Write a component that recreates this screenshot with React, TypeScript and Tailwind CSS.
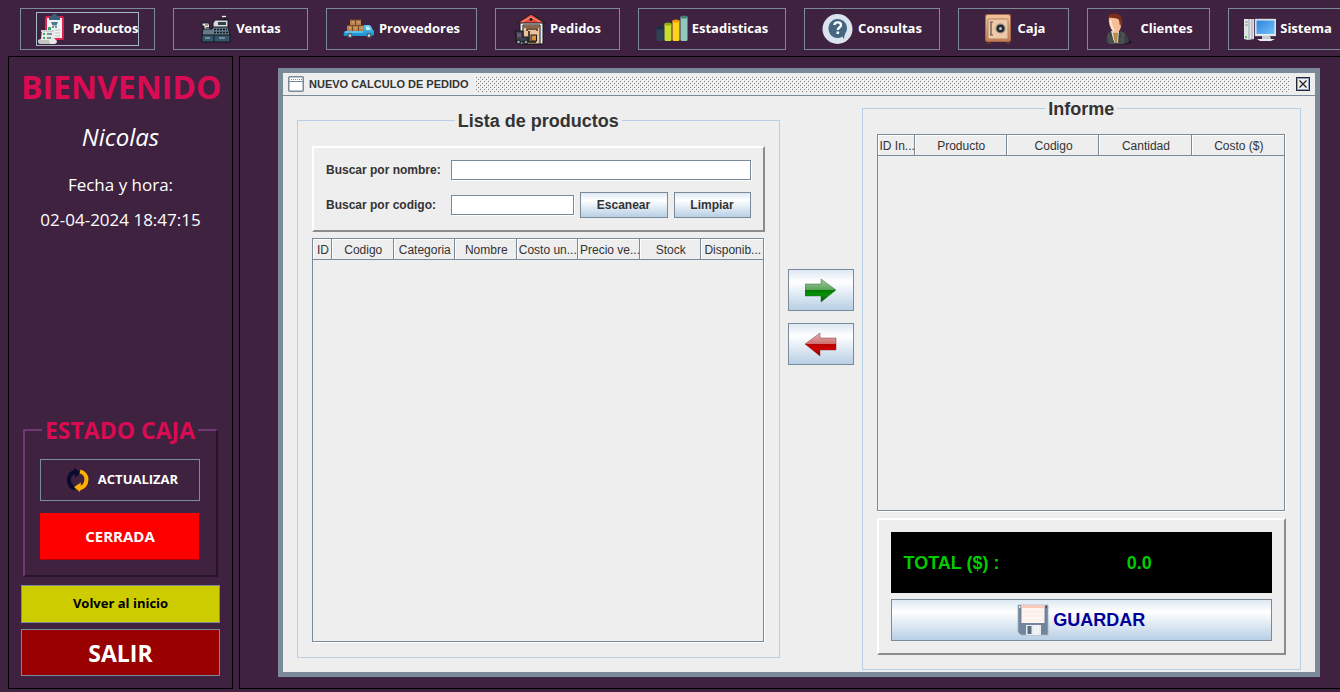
import type { ReactNode } from 'react';

const trebuchet = "font-['Trebuchet_MS','Open_Sans',sans-serif]";
const steel =
  'border border-[#7a8a99] bg-[linear-gradient(to_bottom,#dde8f3_0%,#ffffff_30%,#b8cfe5_100%)]';

function Icon({ children, className = 'size-8' }: { children: ReactNode; className?: string }) {
  return (
    <svg viewBox="0 0 32 32" className={`shrink-0 ${className}`} aria-hidden="true">
      {children}
    </svg>
  );
}

function ProductsIcon() {
  return (
    <Icon>
      <rect x="8" y="3" width="19" height="24" rx="2" fill="#e0224e" />
      <rect x="10" y="5" width="15" height="20" fill="#f2f2f2" />
      <path d="M12 7V4l3-1c0-3 5-3 5 0l3 1v3z" fill="#36607a" />
      <path d="M14 9h7l-1.500 3.500h-4z" fill="#4b7690" />
      <circle cx="16" cy="14" r=".9" fill="#36607a" />
      <circle cx="19" cy="14" r=".9" fill="#36607a" />
      <path d="M18 17h5M18 20h5M18 23h5" stroke="#b9c3ca" />
      <rect x="11" y="14" width="3" height="3" fill="#36b36a" />
      <path d="M5 17h12v8l3 3c0 2-1 3-3 3H5c-3 0-4-1-4-4l3-1z" fill="#e9e9e6" />
      <path d="M1 27h11c0 2 1 4 3 4H5c-3 0-4-1-4-4z" fill="#c4c6c4" />
      <path d="M4 17h13v2H4z" fill="#cdd2d4" />
      <rect x="6" y="20" width="2" height="2" fill="#36b36a" />
      <rect x="6" y="24" width="2" height="2" fill="#36b36a" />
      <path d="M10 21h5M10 25h4" stroke="#54758c" strokeWidth="1.500" />
    </Icon>
  );
}

function SalesIcon() {
  return (
    <Icon>
      <path d="M25 7V3.500h-3" fill="none" stroke="#15191f" strokeWidth="2.500" />
      <path d="M22 3.500h4" stroke="#f2f2f2" strokeWidth="1.500" />
      <path d="M15 7h13v8H13v-5z" fill="#d9dde0" stroke="#15191f" />
      <rect x="18" y="9" width="8" height="3" fill="#32414d" />
      <path d="M2 10h7l1 7H4v-4H2z" fill="#eeeae4" stroke="#15191f" />
      <path d="M5 12h3M6 14.500h3" stroke="#4a4a4a" />
      <path d="M3 16h9l1-2h15l2 8v1H2v-1z" fill="#657b8b" stroke="#15191f" />
      <rect x="2" y="22" width="28" height="7" fill="#35556a" stroke="#15191f" />
      <path d="M14 16.500h13M14 19.500h14" stroke="#15191f" strokeWidth="1.500" strokeDasharray="2 1" />
      <path d="M5 25h5M19 25h6" stroke="#a5c3d4" />
      <path d="M14 22v7" stroke="#15191f" />
    </Icon>
  );
}

function SuppliersIcon() {
  return (
    <Icon>
      <defs>
        <linearGradient id="truck" x1="0" y1="0" x2="0" y2="1">
          <stop offset="0" stopColor="#5cc6f0" />
          <stop offset="1" stopColor="#1590d0" />
        </linearGradient>
      </defs>
      <path d="M7 7h11v5h3v7H4v-7h3z" fill="#b98450" />
      <path d="M7 7h11M4 12.500h17M12.500 7v5M9.500 13v6M15.500 13v6" stroke="#7c4b22" />
      <path d="M9 9h2M14.500 9h2M6 15h2M11.500 15h2M17.500 15h2" stroke="#e0b583" />
      <path d="M2 18h19V12h5c2 0 3 3 4 5l1 1v4l-2 1H1c-1-2 0-4 1-5z" fill="url(#truck)" />
      <path d="M23 13.500h3l2 3.500h-5z" fill="#c3ecfb" />
      <path d="M2 19h18" stroke="#8fd8f5" />
      <circle cx="7" cy="22.500" r="2.500" fill="#50585e" />
      <circle cx="26" cy="22.500" r="2.500" fill="#50585e" />
      <circle cx="7" cy="22.500" r="1.200" fill="#d5dadd" />
      <circle cx="26" cy="22.500" r="1.200" fill="#d5dadd" />
    </Icon>
  );
}

function OrdersIcon() {
  return (
    <Icon>
      <path d="M6 9h23v22H6z" fill="#e7edf0" stroke="#17191f" />
      <path d="M9 12h17v19H9z" fill="#ecc39c" stroke="#17191f" />
      <path d="M9.500 12.500h16V15h-16z" fill="#8f6547" />
      <path d="M13 18v-2h10v2" fill="none" stroke="#4a3527" strokeWidth="1.500" />
      <path d="M17 1 31 10H3z" fill="#e64c3c" stroke="#17191f" />
      <path d="M8 9l9-5 9 5" fill="none" stroke="#ff9c83" />
      <circle cx="17" cy="6.500" r="1.400" fill="#17191f" />
      <rect x="17" y="22" width="5.500" height="6" fill="#d59043" stroke="#17191f" />
      <path d="M1 18h8v6h5v5H2v-9H1z" fill="#3e4151" stroke="#11131a" />
      <path d="M3 20h4v4H3z" fill="#6d5670" />
      <path d="M15 18v11h7" fill="none" stroke="#11131a" strokeWidth="1.500" />
      <circle cx="4.500" cy="29" r="1.900" fill="#9ba5ad" stroke="#11131a" />
      <circle cx="12" cy="29" r="1.900" fill="#9ba5ad" stroke="#11131a" />
    </Icon>
  );
}

function StatsIcon() {
  const bars = [
    { x: 0, y: 14, body: '#2d4256', top: '#1b3042' },
    { x: 8, y: 10, body: '#c8de35', top: '#8fae12' },
    { x: 16, y: 7, body: '#ffd21a', top: '#f09b00' },
    { x: 24, y: 3, body: '#92c7bd', top: '#3f8274' },
  ];
  return (
    <Icon>
      {bars.map(({ x, y, body, top }) => (
        <g key={x}>
          <rect x={x + 0.5} y={y} width="7" height={28 - y} rx="1.500" fill={body} />
          <ellipse cx={x + 4} cy={y + 1} rx="3.500" ry="1.500" fill={top} />
        </g>
      ))}
    </Icon>
  );
}

function HelpIcon() {
  return (
    <Icon>
      <circle cx="15.500" cy="16" r="15" fill="#dbe4ee" />
      <path d="M15.500 6C21 6 25 10 25 15c0 4-2.500 5-3 11-1-1-1.500-2-1.500-2.500-2 1-3.500 1.500-5 1.500C10 25 6.500 20.500 6.500 15.500S10 6 15.500 6z" fill="#456681" />
      <path d="M12.500 12c0-3.500 6.500-3.500 6.500 0 0 2.500-3.200 2.500-3.200 5" fill="none" stroke="#fff" strokeWidth="2.400" />
      <rect x="14.500" y="18.500" width="2.600" height="2.500" fill="#fff" />
    </Icon>
  );
}

function SafeIcon() {
  return (
    <Icon>
      <defs>
        <linearGradient id="safe" x1="0" y1="0" x2="0" y2="1">
          <stop offset="0" stopColor="#f1c59d" />
          <stop offset="1" stopColor="#bd7d55" />
        </linearGradient>
      </defs>
      <path d="M5 29h4v2H5zM24 29h4v2h-4z" fill="#5a3826" />
      <rect x="3" y="1" width="26" height="28" rx="2" fill="#a7694a" />
      <rect x="4" y="2" width="24" height="26" rx="2" fill="url(#safe)" />
      <rect x="6" y="6" width="20" height="20" rx="1" fill="#eec9a7" stroke="#b98361" />
      <path d="M9 9v13M8 9h3M8 22h3" stroke="#5b5149" strokeWidth="1.200" />
      <circle cx="18.500" cy="15.500" r="5" fill="#8b8580" />
      <circle cx="18.500" cy="15.500" r="3.800" fill="#24282c" />
      <circle cx="18.500" cy="15.500" r="1.500" fill="#c5c9cc" />
    </Icon>
  );
}

function ClientsIcon() {
  return (
    <Icon>
      <ellipse cx="17" cy="29" rx="11" ry="2.500" fill="#20122a" />
      <path d="M2 29c0-8 3-10 8-11h5c7 1 9 5 10 11-5 3-18 3-23 0z" fill="#3b3f42" />
      <path d="M7 18l3 12h4l1-12z" fill="#d8d9d6" />
      <path d="M9 20l2 10h2l1-10-2-1z" fill="#b88a43" />
      <path d="M6.500 18l-.5 5 2 1 3 7H5L3 22zM16 18l1 6-4 7h7l1-11z" fill="#4b5053" />
      <path d="M5 5c1-3 11-4 12 1 1 5 0 13-5 14-5-1-8-10-7-15z" fill="#f6be98" />
      <path d="M6.500 7c.5 5 1 8 4 11" fill="none" stroke="#ffe2c9" strokeWidth="2" />
      <path d="M3 5C5-1 16-1 17.500 5c.5 3 0 6-1.500 8l-1-6c-3-3-7-1-11-3z" fill="#7a2f17" />
    </Icon>
  );
}

function SystemIcon() {
  return (
    <Icon>
      <defs>
        <linearGradient id="screen" x1="0" y1="0" x2="1" y2="1">
          <stop offset="0" stopColor="#2c83dc" />
          <stop offset="1" stopColor="#73c2fb" />
        </linearGradient>
      </defs>
      <path d="M0 6h10v20l-6 1-4-1z" fill="#dfe3e5" />
      <path d="M5 6v21M8 6v20" stroke="#9ea5a9" />
      <path d="M1 9h3M1 12h3" stroke="#8a9297" />
      <rect x="1" y="23" width="2" height="2" fill="#62bf58" />
      <rect x="11" y="6" width="21" height="17" fill="#edf0f2" stroke="#a6afb5" strokeWidth=".5" />
      <rect x="12.500" y="7.500" width="18" height="13.500" fill="url(#screen)" />
      <path d="M18 23h8l1 3h-9z" fill="#c7ccd0" />
      <path d="M13 26h18l-4 2H16z" fill="#e8ebed" />
    </Icon>
  );
}

function RefreshIcon() {
  return (
    <Icon>
      <path d="M13 24.500C4.500 21 5 9 14 7.500" fill="none" stroke="#080b2c" strokeWidth="4" />
      <path d="M12 4l7 4.500-6 5z" fill="#080b2c" />
      <path d="M18 7.500c9 2 8.500 14.500-1 17" fill="none" stroke="#ffb000" strokeWidth="4" />
      <path d="M19 18.500l-7 4.500 6 5z" fill="#ffb000" />
    </Icon>
  );
}

function Arrow({ color }: { color: 'green' | 'red' }) {
  const green = color === 'green';
  const shape = green ? 'M0 10h16V5l15 11-15 12v-6H0z' : 'M31 10H15V5L0 16l15 12v-6h16z';
  return (
    <Icon>
      <defs>
        <linearGradient id={color} x1="0" y1="0" x2="0" y2="1">
          <stop offset="0" stopColor={green ? '#a5cda3' : '#e0b4b4'} />
          <stop offset=".48" stopColor={green ? '#5aa35a' : '#cf6d6d'} />
          <stop offset=".49" stopColor={green ? '#007c00' : '#b80000'} />
          <stop offset=".7" stopColor={green ? '#079407' : '#d00000'} />
          <stop offset="1" stopColor={green ? '#004c00' : '#760000'} />
        </linearGradient>
      </defs>
      <path d={shape} fill={`url(#${color})`} stroke={green ? '#286328' : '#7c2424'} strokeOpacity=".55" strokeWidth=".8" />
    </Icon>
  );
}

function FloppyIcon() {
  return (
    <Icon>
      <path d="M1 1h30v30H4l-3-3z" fill="#71869d" stroke="#a2b2c1" strokeWidth=".8" />
      <rect x="4.500" y="1" width="23" height="18" fill="#fff5f0" />
      <rect x="4.500" y="1" width="23" height="3" fill="#f9cabc" />
      <path d="M5 8h22M5 12h22M5 16h22" stroke="#f4e6e1" strokeWidth=".7" />
      <rect x="2" y="2" width="1.500" height="2" fill="#e7edf2" />
      <rect x="28.500" y="2" width="1.500" height="2" fill="#3c4b5c" />
      <rect x="9" y="21" width="15" height="10" fill="#e9ebec" />
      <rect x="10.500" y="22" width="4" height="8" fill="#596f86" />
      <path d="M18 21v10M21 21v10" stroke="#fff" />
    </Icon>
  );
}

const menu = [
  { label: 'Productos', width: 'w-[135px]', icon: <ProductsIcon /> },
  { label: 'Ventas', width: 'w-[135px]', icon: <SalesIcon /> },
  { label: 'Proveedores', width: 'w-[151px]', icon: <SuppliersIcon /> },
  { label: 'Pedidos', width: 'w-[125px]', icon: <OrdersIcon /> },
  { label: 'Estadisticas', width: 'w-[148px]', icon: <StatsIcon /> },
  { label: 'Consultas', width: 'w-[136px]', icon: <HelpIcon /> },
  { label: 'Caja', width: 'w-[111px]', icon: <SafeIcon /> },
  { label: 'Clientes', width: 'w-[123px]', icon: <ClientsIcon /> },
  { label: 'Sistema', width: 'w-[120px]', icon: <SystemIcon /> },
];

function DataTable({ columns, className }: { columns: [string, string][]; className: string }) {
  return (
    <div className={`mr-px border border-[#7a8a99] shadow-[1px_1px_0_#ffffff] ${className}`}>
      <table className="w-full table-fixed border-separate border-spacing-0 text-[12px] leading-4">
        <thead>
          <tr>
            {columns.map(([name, width]) => (
              <th
                key={name}
                className={`h-[21px] border-r border-b border-[#7a8a99] p-0 pt-px pl-0.5 text-center font-normal whitespace-nowrap shadow-[inset_1px_1px_0_#ffffff] last:border-r-0 ${width}`}
              >
                {name}
              </th>
            ))}
          </tr>
        </thead>
        <tbody />
      </table>
    </div>
  );
}

const raised =
  'border-2 border-t-white border-l-white border-r-[#8c8c8c] border-b-[#8c8c8c]';
const field =
  'h-5 min-w-0 border border-[#7a8a99] bg-white px-1 text-[12px] shadow-[1px_1px_0_#ffffff] outline-none';
const heading = 'mx-auto h-5 px-[3px] text-[18px] leading-[22px] font-bold';

export default function App() {
  return (
    <div className={`flex min-h-screen flex-col overflow-hidden bg-[#3e2240] pb-[3px] text-white ${trebuchet}`}>
      <nav className="flex gap-[18px] overflow-hidden px-5 pt-2 pb-1.5">
        {menu.map(({ label, width, icon }, i) => (
          <button
            key={label}
            type="button"
            className={`flex h-[42px] shrink-0 items-center justify-center border border-[#7a8a99] text-[13px] font-bold ${width}`}
          >
            <span className={`flex items-center gap-1 ${i === 0 ? 'outline outline-[#a3b8cc]' : ''}`}>
              {icon}
              {label}
            </span>
          </button>
        ))}
      </nav>

      <div className="flex flex-1 gap-1.5 pl-2">
        <aside className="flex w-[225px] shrink-0 flex-col border border-black px-3 pb-3 text-center">
          <h1 className="mt-2 text-[32px] leading-[44px] font-bold text-[#d90b52]">BIENVENIDO</h1>
          <p className="mt-[13px] text-[24px] leading-[30px] italic">Nicolas</p>
          <p className="mt-[21px] text-[17px] leading-6">Fecha y hora:</p>
          <p className="mt-[11px] text-[17px] leading-6 whitespace-nowrap">02-04-2024 18:47:15</p>

          <fieldset className="mx-0.5 mt-auto flex flex-col gap-3 border-2 border-t-[#6d3b71] border-r-[#261528] border-b-[#261528] border-l-[#6d3b71] pt-3.5 pr-4 pb-[15px] pl-[15px]">
            <legend className="mx-auto px-[3px] text-[23px] leading-[30px] font-bold whitespace-nowrap text-[#d90b52]">
              ESTADO CAJA
            </legend>
            <button type="button" className="flex h-[42px] items-center justify-center gap-1 border border-[#7a8a99] text-[13px] font-bold">
              <RefreshIcon />
              ACTUALIZAR
            </button>
            <div className="flex h-[47px] items-center justify-center border border-t-[#ff0000] border-r-[#b20000] border-b-[#b20000] border-l-[#ff0000] bg-[#ff0000] text-[15px] font-bold">
              CERRADA
            </div>
          </fieldset>

          <button type="button" className="mt-2 h-[38px] border border-[#7a8a99] bg-[#cccc00] text-[13px] font-bold text-black">
            Volver al inicio
          </button>
          <button type="button" className="mt-1.5 h-[47px] border border-[#7a8a99] bg-[#990000] text-[23px] leading-8 font-bold">
            SALIR
          </button>
        </aside>

        <main className="flex min-w-0 flex-1 border border-r-0 border-black pt-[11px] pr-5 pb-[11px] pl-[38px]">
          <section className="flex min-w-0 flex-1 flex-col border-5 border-[#7a8a99] bg-[#eeeeee] font-['Liberation_Sans',Arial,sans-serif] text-[#333333]">
            <header className="flex h-[23px] items-center border-b border-[#7a8a99] pr-[5px] pl-[5px]">
              <svg viewBox="0 0 16 16" className="size-4 shrink-0" aria-hidden="true">
                <rect x=".75" y=".75" width="14.500" height="14.500" rx="1" fill="#fff" stroke="#7a8a99" strokeWidth="1.500" />
                <path d="M1 5.500h14" stroke="#7a8a99" />
                <path d="M3 3.500h11" stroke="#7a8a99" strokeDasharray="1 1" />
              </svg>
              <h2 className="ml-[5px] text-[11px] leading-4 font-bold whitespace-nowrap">NUEVO CALCULO DE PEDIDO</h2>
              <svg className="mr-1.5 ml-1.5 h-4 min-w-0 flex-1" aria-hidden="true">
                <defs>
                  <pattern id="bumps" width="4" height="4" patternUnits="userSpaceOnUse">
                    <path d="M0 0h1v1H0zM2 2h1v1H2z" fill="#fff" />
                    <path d="M1 1h1v1H1zM3 3h1v1H3z" fill="#7a7a7a" />
                  </pattern>
                </defs>
                <rect width="100%" height="100%" fill="url(#bumps)" />
              </svg>
              <button type="button" aria-label="Cerrar" className="shrink-0">
                <svg viewBox="0 0 14 14" className="size-3.5" aria-hidden="true">
                  <rect x=".5" y=".5" width="13" height="13" fill="#eee" stroke="#26262e" />
                  <path d="M1.500 13V1.500H13M12.500 2v10.500H2" fill="none" stroke="#6382bf" strokeOpacity=".7" />
                  <path d="M3.500 3.500l7 7M10.500 3.500l-7 7" stroke="#222" strokeWidth="1.300" />
                </svg>
              </button>
            </header>

            <div className="flex flex-1 gap-2 px-3.5">
              <fieldset className="my-3.5 flex min-w-0 flex-[484_1_0] flex-col border border-[#b8cfe5] px-3.5 pt-4 pb-[15px]">
                <legend className={heading}>Lista de productos</legend>
                <div className={`flex flex-col gap-3 p-3 text-[12px] font-bold ${raised}`}>
                  <div className="flex h-5 items-center">
                    <label htmlFor="nombre" className="w-[125px] shrink-0">Buscar por nombre:</label>
                    <input id="nombre" type="text" className={`flex-1 ${field}`} />
                  </div>
                  <div className="flex items-center gap-1.5">
                    <label htmlFor="codigo" className="w-[119px] shrink-0">Buscar por codigo:</label>
                    <input id="codigo" type="text" className={`flex-1 ${field}`} />
                    <button type="button" className={`h-[26px] w-[88px] shrink-0 ${steel}`}>Escanear</button>
                    <button type="button" className={`h-[26px] w-[77px] shrink-0 ${steel}`}>Limpiar</button>
                  </div>
                </div>
                <DataTable
                  className="mt-1.5 flex-1"
                  columns={[
                    ['ID', 'w-[19px]'],
                    ['Codigo', ''],
                    ['Categoria', ''],
                    ['Nombre', ''],
                    ['Costo un...', ''],
                    ['Precio ve...', ''],
                    ['Stock', ''],
                    ['Disponib...', ''],
                  ]}
                />
              </fieldset>

              <div className="flex w-[66px] shrink-0 flex-col gap-3 pt-[173px]">
                <button type="button" aria-label="Agregar" className={`flex h-[42px] items-center justify-center ${steel}`}>
                  <Arrow color="green" />
                </button>
                <button type="button" aria-label="Quitar" className={`flex h-[42px] items-center justify-center ${steel}`}>
                  <Arrow color="red" />
                </button>
              </div>

              <fieldset className="my-0.5 flex min-w-0 flex-[438_1_0] flex-col border border-[#b8cfe5] px-3.5 pt-4 pb-3.5">
                <legend className={heading}>Informe</legend>
                <DataTable
                  className="flex-1"
                  columns={[
                    ['ID In...', 'w-[37px]'],
                    ['Producto', ''],
                    ['Codigo', ''],
                    ['Cantidad', ''],
                    ['Costo ($)', ''],
                  ]}
                />
                <div className={`mt-[7px] flex flex-col gap-1.5 p-3 text-[18px] font-bold ${raised}`}>
                  <div className="flex h-[61px] items-center bg-black pt-0.5 pl-[13px] text-[#00cc00]">
                    <span className="whitespace-nowrap">TOTAL ($) :</span>
                    <output className="ml-[7px] flex-1 text-center">0.0</output>
                  </div>
                  <button type="button" className={`flex h-[42px] items-center justify-center gap-1 text-[#000099] ${steel}`}>
                    <FloppyIcon />
                    GUARDAR
                  </button>
                </div>
              </fieldset>
            </div>
          </section>
        </main>
      </div>
    </div>
  );
}
